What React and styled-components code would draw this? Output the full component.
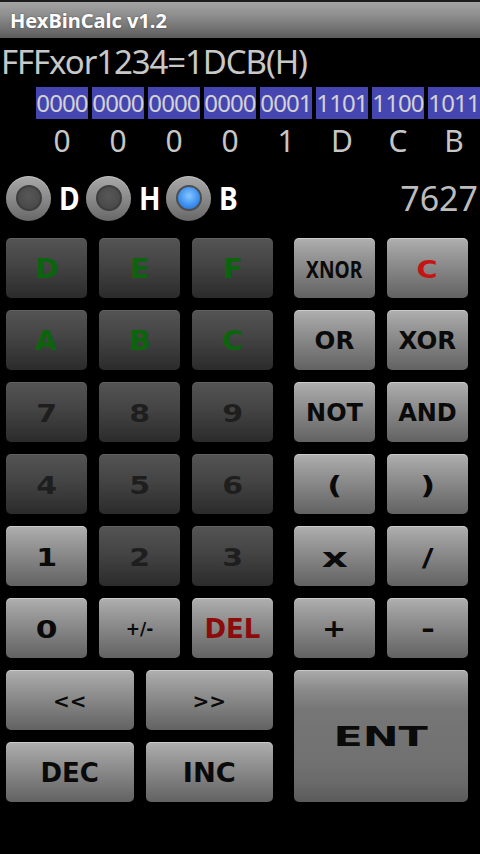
import React from 'react';
import styled, { createGlobalStyle } from 'styled-components';

const Global = createGlobalStyle`
  html, body { margin: 0; padding: 0; background: #000; }
  body { width: 480px; height: 854px; overflow: hidden; }
  #root { width: 480px; height: 854px; }
`;

const Screen = styled.div`
  width: 480px;
  height: 854px;
  background: #000;
  display: flex;
  flex-direction: column;
  font-family: "Noto Sans", "Open Sans", sans-serif;
`;

const TitleBar = styled.div`
  height: 36px;
  border-top: 2px solid #1c1c1c;
  background: linear-gradient(to bottom, #a4a4a4 0%, #8c8c8c 40%, #5c5c5c 100%);
  display: flex;
  align-items: center;
  padding-left: 10px;
  color: #fff;
  font-weight: 700;
  font-size: 20px;
  text-shadow: 0 0 2px rgba(0, 0, 0, 0.45);
`;

const Expression = styled.div`
  box-sizing: border-box;
  height: 46px;
  padding: 2px 0 0 1px;
  line-height: 44px;
  font-size: 33px;
  letter-spacing: -1.1px;
  color: #c8c8c8;
  white-space: nowrap;
`;

const BinaryRow = styled.div`
  margin-top: 3px;
  height: 32px;
  display: flex;
  gap: 4px;
  padding-left: 36px;
  overflow: hidden;
`;

const BinBlock = styled.div`
  flex: 0 0 52px;
  background: #4646b2;
  color: #d2d2d2;
  font-size: 24px;
  line-height: 32px;
  text-align: center;
  letter-spacing: -0.9px;
  white-space: nowrap;
`;

const HexRow = styled.div`
  margin-top: 2px;
  height: 40px;
  display: flex;
  gap: 4px;
  padding-left: 36px;
`;

const HexDigit = styled.div`
  flex: 0 0 52px;
  text-align: center;
  font-size: 30px;
  line-height: 40px;
  color: #c6c6c6;
`;

const RadioRow = styled.div`
  margin-top: 14px;
  height: 46px;
  display: flex;
  align-items: center;
  padding: 0 2px 0 6px;
`;

const RadioItem = styled.div`
  width: 80px;
  display: flex;
  align-items: center;
  gap: 8px;
`;

const RadioOuter = styled.span`
  flex: none;
  width: 45px;
  height: 45px;
  border-radius: 50%;
  background: linear-gradient(to bottom, #a9a9a9 0%, #8a8a8a 50%, #676767 100%);
  box-shadow: inset 0 1px 1px rgba(255, 255, 255, 0.3);
  display: flex;
  align-items: center;
  justify-content: center;
`;

const RadioInner = styled.span`
  width: 22px;
  height: 22px;
  border-radius: 50%;
  border: 2px solid ${p => (p.$on ? '#4d4d4d' : '#3e3e3e')};
  background: ${p =>
    p.$on
      ? 'radial-gradient(circle at 50% 40%, #86c6ff 0%, #3f92f0 55%, #2062c2 100%)'
      : 'radial-gradient(circle at 50% 40%, #575757 0%, #4a4a4a 70%, #404040 100%)'};
`;

const RadioLetter = styled.span`
  color: #fff;
  font-weight: 700;
  font-size: 32px;
  line-height: 1;
  display: inline-block;
  transform: scaleX(0.88);
  transform-origin: left center;
`;

const Result = styled.div`
  margin-left: auto;
  font-size: 34px;
  color: #bcbcbc;
  line-height: 46px;
`;

const Keypad = styled.div`
  margin-top: 17px;
  padding: 0 6px;
  display: grid;
  grid-template-columns: 267px 174px;
  column-gap: 21px;
  row-gap: 12px;
`;

const Pad = styled.div`
  display: grid;
  grid-template-columns: repeat(${p => p.$cols}, 1fr);
  grid-auto-rows: 60px;
  gap: 12px;
`;

const backgrounds = {
  dark: 'linear-gradient(to bottom, #545454 0%, #444 45%, #2b2b2b 100%)',
  light: 'linear-gradient(to bottom, #b0b0b0 0%, #9a9a9a 25%, #7c7c7c 65%, #626262 100%)',
  big: 'linear-gradient(to bottom, #ababab 0%, #8a8a8a 15%, #767676 30%, #717171 70%, #6a6a6a 85%, #5a5a5a 100%)',
};

const Key = styled.button`
  all: unset;
  box-sizing: border-box;
  display: flex;
  align-items: center;
  justify-content: center;
  padding-top: 2px;
  height: ${p => (p.$variant === 'big' ? '132px' : '60px')};
  border-radius: 5px;
  background: ${p => backgrounds[p.$variant]};
  box-shadow: inset 0 1px 0 ${p => (p.$variant === 'dark' ? 'rgba(255,255,255,0.08)' : 'rgba(255,255,255,0.35)')};
  overflow: hidden;
`;

const Label = styled.span`
  display: inline-block;
  font-family: ${p => (p.$narrow ? '"Noto Sans"' : '"DejaVu Sans"')}, sans-serif;
  font-weight: 700;
  font-size: ${p => p.$size}px;
  line-height: 1;
  color: ${p => p.$color};
  transform: scaleX(${p => p.$sx});
  white-space: nowrap;
`;

const GREEN = '#0c640c';
const DARKTXT = '#1e1e1e';
const BLACK = '#0a0a0a';

const hexKeys = [
  { t: 'D', v: 'dark', c: GREEN, s: 26, x: 1.1 },
  { t: 'E', v: 'dark', c: GREEN, s: 26, x: 1.1 },
  { t: 'F', v: 'dark', c: GREEN, s: 26, x: 1.1 },
  { t: 'A', v: 'dark', c: GREEN, s: 26, x: 1.1 },
  { t: 'B', v: 'dark', c: GREEN, s: 26, x: 1.1 },
  { t: 'C', v: 'dark', c: GREEN, s: 26, x: 1.1 },
  { t: '7', v: 'dark', c: DARKTXT, s: 25, x: 1.2 },
  { t: '8', v: 'dark', c: DARKTXT, s: 25, x: 1.2 },
  { t: '9', v: 'dark', c: DARKTXT, s: 25, x: 1.2 },
  { t: '4', v: 'dark', c: DARKTXT, s: 25, x: 1.2 },
  { t: '5', v: 'dark', c: DARKTXT, s: 25, x: 1.2 },
  { t: '6', v: 'dark', c: DARKTXT, s: 25, x: 1.2 },
  { t: '1', v: 'light', c: BLACK, s: 25, x: 1.2 },
  { t: '2', v: 'dark', c: DARKTXT, s: 25, x: 1.2 },
  { t: '3', v: 'dark', c: DARKTXT, s: 25, x: 1.2 },
  { t: '0', v: 'light', c: BLACK, s: 25, x: 1.25 },
  { t: '+/-', v: 'light', c: BLACK, s: 17, x: 1 },
  { t: 'DEL', v: 'light', c: '#8c0c0c', s: 26, x: 1 },
];

const opKeys = [
  { t: 'XNOR', v: 'light', c: BLACK, s: 24, x: 0.8, n: true },
  { t: 'C', v: 'light', c: '#c41414', s: 25, x: 1.15 },
  { t: 'OR', v: 'light', c: BLACK, s: 24, x: 1.02 },
  { t: 'XOR', v: 'light', c: BLACK, s: 24, x: 1.02 },
  { t: 'NOT', v: 'light', c: BLACK, s: 24, x: 1 },
  { t: 'AND', v: 'light', c: BLACK, s: 24, x: 1 },
  { t: '(', v: 'light', c: BLACK, s: 25, x: 1.3 },
  { t: ')', v: 'light', c: BLACK, s: 25, x: 1.3 },
  { t: 'x', v: 'light', c: BLACK, s: 27, x: 1.5 },
  { t: '/', v: 'light', c: BLACK, s: 25, x: 1.3 },
  { t: '+', v: 'light', c: BLACK, s: 24, x: 1.2 },
  { t: '-', v: 'light', c: BLACK, s: 24, x: 1.4 },
];

const navKeys = [
  { t: '<<', v: 'light', c: BLACK, s: 20, x: 1 },
  { t: '>>', v: 'light', c: BLACK, s: 20, x: 1 },
  { t: 'DEC', v: 'light', c: BLACK, s: 26, x: 1 },
  { t: 'INC', v: 'light', c: BLACK, s: 26, x: 1.05 },
];

const renderKey = (k, i) => (
  <Key key={i} $variant={k.v}>
    <Label $size={k.s} $sx={k.x} $color={k.c} $narrow={k.n}>
      {k.t}
    </Label>
  </Key>
);

const bin = ['0000', '0000', '0000', '0000', '0001', '1101', '1100', '1011'];
const hex = ['0', '0', '0', '0', '1', 'D', 'C', 'B'];
const modes = [
  { l: 'D', on: false },
  { l: 'H', on: false },
  { l: 'B', on: true },
];

export default function App() {
  return (
    <Screen>
      <Global />
      <TitleBar>HexBinCalc v1.2</TitleBar>
      <Expression>FFFxor1234=1DCB(H)</Expression>
      <BinaryRow>
        {bin.map((b, i) => (
          <BinBlock key={i}>{b}</BinBlock>
        ))}
      </BinaryRow>
      <HexRow>
        {hex.map((h, i) => (
          <HexDigit key={i}>{h}</HexDigit>
        ))}
      </HexRow>
      <RadioRow>
        {modes.map(m => (
          <RadioItem key={m.l}>
            <RadioOuter>
              <RadioInner $on={m.on} />
            </RadioOuter>
            <RadioLetter>{m.l}</RadioLetter>
          </RadioItem>
        ))}
        <Result>7627</Result>
      </RadioRow>
      <Keypad>
        <Pad $cols={3}>{hexKeys.map(renderKey)}</Pad>
        <Pad $cols={2}>{opKeys.map(renderKey)}</Pad>
        <Pad $cols={2}>{navKeys.map(renderKey)}</Pad>
        {renderKey({ t: 'ENT', v: 'big', c: BLACK, s: 26, x: 1.65 }, 'ent')}
      </Keypad>
    </Screen>
  );
}
